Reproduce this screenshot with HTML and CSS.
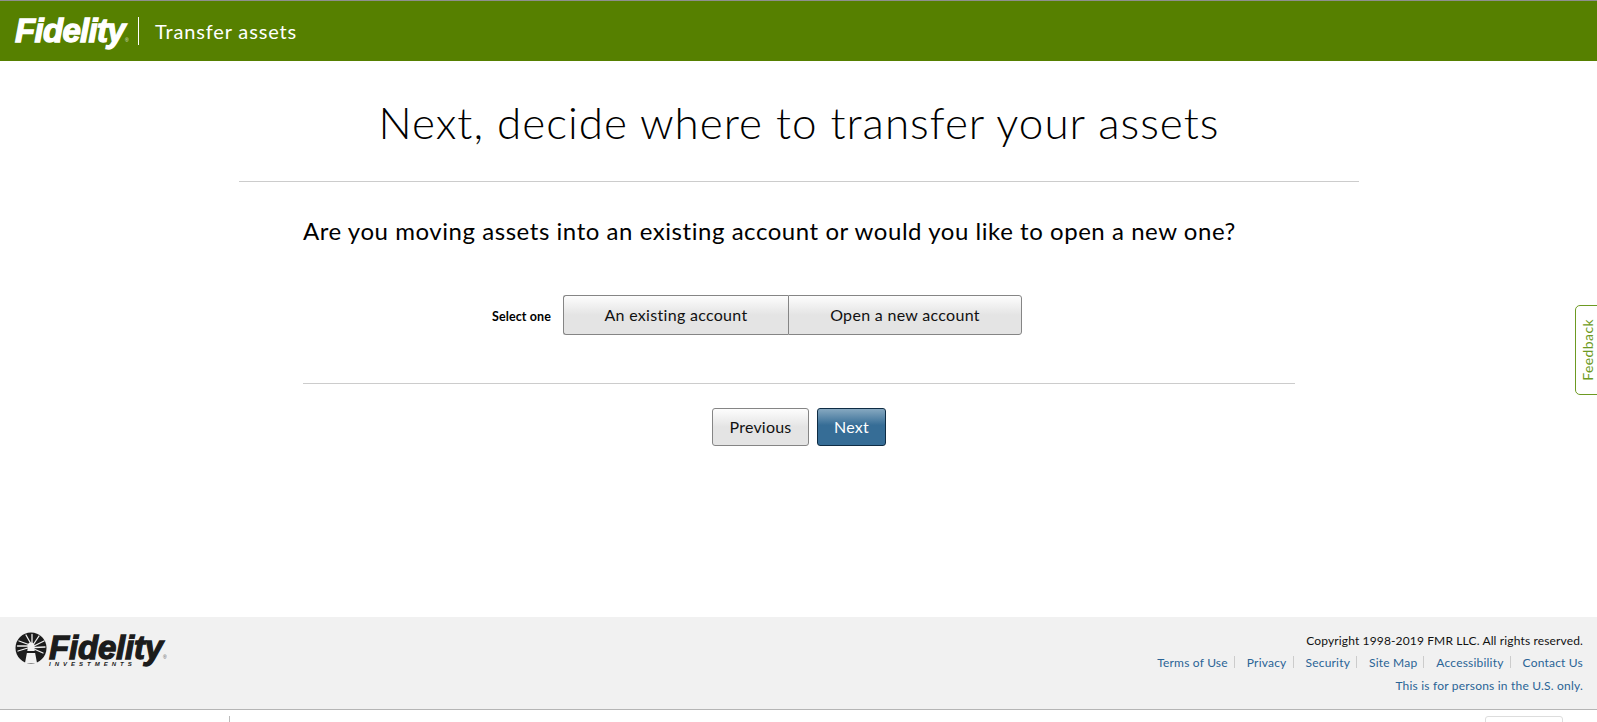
FILE: index.html
```html
<!DOCTYPE html>
<html lang="en">
<head>
<meta charset="utf-8">
<title>Transfer assets</title>
<link rel="stylesheet" href="styles.css">
</head>
<body>
<header class="topbar">
  <span class="brand">Fidelity<sup class="reg">®</sup></span>
  <span class="topbar-rule"></span>
  <span class="topbar-title">Transfer assets</span>
</header>
<main class="main">
  <h1 class="headline">Next, decide where to transfer your assets</h1>
  <section class="panel">
    <h2 class="question">Are you moving assets into an existing account or would you like to open a new one?</h2>
    <div class="select-row">
      <span class="select-label">Select one</span>
      <div class="segmented">
        <button class="seg seg-existing" type="button">An existing account</button>
        <button class="seg seg-new" type="button">Open a new account</button>
      </div>
    </div>
    <div class="actions">
      <button class="btn btn-secondary" type="button">Previous</button>
      <button class="btn btn-primary" type="button">Next</button>
    </div>
  </section>
</main>
<a class="feedback" href="#"><span class="feedback-text">Feedback</span></a>
<footer class="footer">
  <div class="footer-logo">
    <svg class="sunburst" width="32" height="32" viewBox="0 0 32 32" aria-hidden="true">
      <circle cx="16" cy="16" r="15.5" fill="#1c1c1c"/>
      <g stroke="#f1f1f1" stroke-width="1.300" stroke-linecap="round">
        <path d="M15 13L4 9M15 14L2.500 14M14.500 15.500L3 19M16 12L11 3M17 12L17 2.500M18 13L24 4M19 14L29 9M19.500 15.500L30 15M19 17L28 21"/>
      </g>
      <path d="M16 11L19 15L22 31H10L13 15Z" fill="#f1f1f1"/>
      <circle cx="16" cy="14" r="3.500" fill="#f1f1f1"/>
      <path d="M11 19H21L22 21H10Z" fill="#1c1c1c"/>
    </svg>
    <div class="footer-wordmark">
      <span class="footer-brand">Fidelity<sup class="reg reg-dark">®</sup></span>
      <span class="footer-sub">INVESTMENTS</span>
    </div>
  </div>
  <div class="footer-info">
    <p class="copyright">Copyright 1998-2019 FMR LLC. All rights reserved.</p>
    <nav class="footer-links">
      <a href="#">Terms of Use</a><i></i>
      <a href="#">Privacy</a><i></i>
      <a href="#">Security</a><i></i>
      <a href="#">Site Map</a><i></i>
      <a href="#">Accessibility</a><i></i>
      <a href="#">Contact Us</a>
    </nav>
    <a class="us-only" href="#">This is for persons in the U.S. only.</a>
  </div>
</footer>
<div class="below">
  <span class="below-stub"></span>
  <span class="below-box"></span>
</div>
</body>
</html>
```
FILE: styles.css
```css
* { box-sizing: border-box; }
html, body { margin: 0; padding: 0; }
body {
  width: 1597px;
  height: 722px;
  overflow: hidden;
  background: #fff;
  color: #000;
  font-family: Lato, "Open Sans", sans-serif;
  position: relative;
}
.topbar {
  height: 61px;
  background: #568000;
  border-top: 1px solid #8f8f8f;
  display: flex;
  align-items: center;
  padding-left: 15px;
  color: #fff;
}
.brand {
  font: italic 700 33px/1 "Liberation Sans", sans-serif;
  -webkit-text-stroke: 1.3px #fff;
  letter-spacing: -0.7px;
  width: 123px;
  white-space: nowrap;
  position: relative;
  top: -1px;
}
.reg {
  font: 400 5px/1 "Liberation Sans", sans-serif;
  -webkit-text-stroke: 0;
  letter-spacing: 0;
  vertical-align: baseline;
  opacity: .8;
}
.topbar-rule { width: 1px; height: 28px; background: #fff; }
.topbar-title { margin-left: 16px; font-size: 20px; letter-spacing: .85px; line-height: 24px; }
.main { height: 556px; display: flex; flex-direction: column; align-items: center; }
.headline {
  margin: 0 0 0 1px;
  width: 1120px;
  height: 121px;
  border-bottom: 1px solid #ccc;
  padding-top: 31px;
  text-align: center;
  font-weight: 300;
  font-size: 44px;
  line-height: 60px;
  letter-spacing: 1px;
}
.panel { width: 992px; margin-left: 1px; }
.question {
  margin: 33px 0 0;
  font-weight: 400;
  font-size: 24px;
  line-height: 32px;
  letter-spacing: .55px;
  white-space: nowrap;
}
.select-row {
  height: 89px;
  margin-top: 48px;
  display: flex;
  align-items: flex-start;
  border-bottom: 1px solid #ccc;
  padding-left: 189px;
}
.select-label {
  font-size: 12.500px;
  font-weight: 700;
  line-height: 44px;
  letter-spacing: .1px;
  width: 71px;
  white-space: nowrap;
}
.segmented { display: flex; height: 40px; width: 459px; }
.seg {
  height: 40px;
  padding: 0;
  font: 400 16px/1 Lato, sans-serif;
  letter-spacing: .3px;
  color: #111;
  background: linear-gradient(#fdfdfd 0, #e4e4e4 50%, #e4e4e4 100%);
  border: 1px solid #858585;
}
.seg-existing { width: 225px; border-radius: 3px 0 0 3px; border-right: 0; }
.seg-new { width: 234px; border-radius: 0 3px 3px 0; }
.actions {
  display: flex;
  justify-content: center;
  gap: 8px;
  margin-top: 24px;
}
.btn {
  height: 38px;
  padding: 0;
  font: 400 16px/1 Lato, sans-serif;
  letter-spacing: .2px;
  border-radius: 3px;
}
.btn-secondary {
  width: 97px;
  color: #111;
  background: linear-gradient(#fdfdfd 0, #e4e4e4 50%, #e4e4e4 100%);
  border: 1px solid #858585;
}
.btn-primary {
  width: 69px;
  color: #fff;
  background: linear-gradient(#86a8c0 0, #366d96 45%, #366d96 100%);
  border: 1px solid #0e2c44;
}
.feedback {
  position: absolute;
  left: 1575px;
  top: 305px;
  width: 24px;
  height: 90px;
  border: 1px solid #6d9a22;
  border-radius: 5px 0 0 5px;
  background: #fff;
  display: flex;
  align-items: center;
  justify-content: center;
  text-decoration: none;
}
.feedback-text {
  writing-mode: vertical-rl;
  transform: rotate(180deg);
  color: #6d9a22;
  font-size: 14px;
  letter-spacing: .4px;
}
.footer {
  height: 93px;
  background: #f1f1f1;
  border-bottom: 1px solid #b5b5b5;
  display: flex;
  justify-content: space-between;
  padding: 12px 14px 0 15px;
}
.footer-logo { display: flex; align-items: flex-start; gap: 2px; padding-top: 3px; }
.footer-wordmark { display: flex; flex-direction: column; margin-top: 3px; }
.footer-brand {
  font: italic 700 33px/25px "Liberation Sans", sans-serif;
  -webkit-text-stroke: 1.300px #1c1c1c;
  letter-spacing: -0.2px;
  color: #1c1c1c;
  white-space: nowrap;
}
.reg-dark { color: #333; }
.footer-sub {
  font: italic 700 6px/6px "Liberation Sans", sans-serif;
  letter-spacing: 4px;
  margin-top: 1px;
  color: #1c1c1c;
}
.footer-info { text-align: right; font-size: 12px; line-height: 23px; letter-spacing: .2px; }
.copyright { margin: 0; color: #111; height: 22px; letter-spacing: .14px; }
.footer-links { display: flex; justify-content: flex-end; align-items: center; height: 22px; }
.footer-links a, .us-only { color: #2a6496; text-decoration: none; }
.footer-links i {
  width: 1px;
  height: 12px;
  background: #ccc;
  margin: 0 12px 0 6px;
}
.us-only { display: block; height: 23px; margin-top: 1px; }
.below { height: 12px; display: flex; padding-top: 6px; }
.below-stub { width: 1px; height: 6px; margin-left: 229px; background: #bbb; }
.below-box {
  width: 78px;
  height: 10px;
  margin-left: 1255px;
  border: 1px solid #ddd;
  border-radius: 3px 3px 0 0;
}
```
